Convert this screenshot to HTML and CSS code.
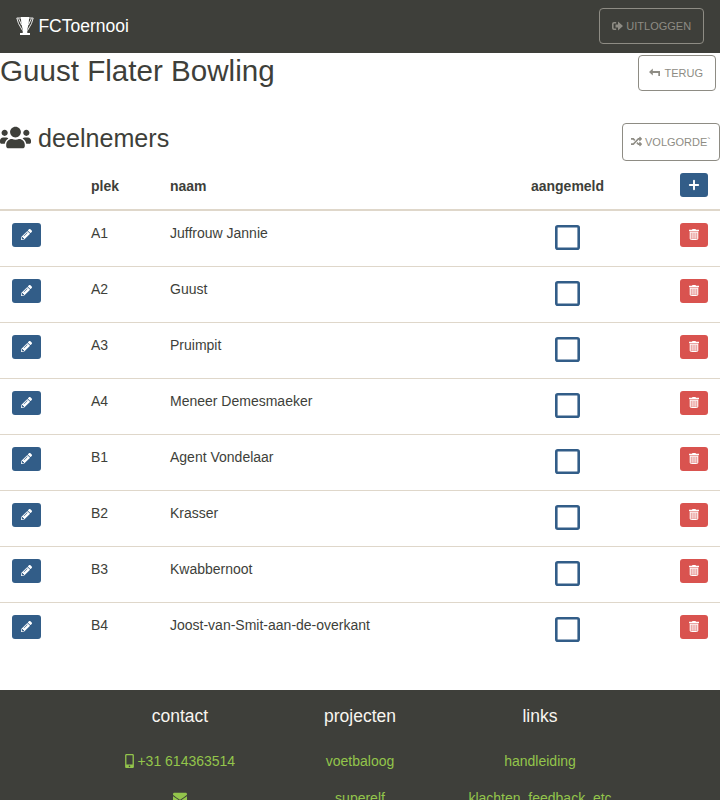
FILE: index.html
```html
<!DOCTYPE html>
<html lang="nl">
<head>
<meta charset="utf-8">
<title>FCToernooi</title>
<link rel="stylesheet" href="styles.css">
</head>
<body>
<svg class="defs" aria-hidden="true">
<symbol id="trophy" viewBox="0 0 18 18"><path fill="currentColor" d="M4.800 0h8.400l-.6 7-1.300 5.500v3.500H14v2H4v-2h2.700v-3.500L5.400 7z"/><path fill="none" stroke="currentColor" stroke-width=".9" d="M5 1H.8L2.500 6.500 6.500 13.500M13 1h4.200L15.500 6.500 11.500 13.500M2.600 1.500l3 6.500M15.400 1.500l-3 6.500"/></symbol>
<symbol id="out" viewBox="0 0 11 10"><path fill="none" stroke="currentColor" stroke-width="1.600" d="M4.200 1.800H2Q.8 1.800.8 3v4Q.8 8.200 2 8.200h2.200"/><path fill="currentColor" d="M3.500 3.400H6V.5L11 5 6 9.500V6.600H3.500z"/></symbol>
<symbol id="back" viewBox="0 0 11 10"><path fill="currentColor" d="M0 4L3.800.5V3H11v5H9.300V5H3.800v2.500z"/></symbol>
<symbol id="random" viewBox="0 0 512 512"><path fill="currentColor" d="M505 359c9 9 9 25 0 34l-80 80c-15 15-41 4-41-17v-40h-58c-3 0-7-2-9-4l-70-75 53-57 53 56h31v-40c0-21 26-32 41-17zM12 176h84l53 56 53-57-70-75c-2-3-5-4-9-4H12c-7 0-12 5-12 12v56c0 7 5 12 12 12zm372 0v40c0 21 26 32 41 17l80-80c9-9 9-25 0-34l-80-80c-15-15-41-4-41 17v40h-58c-3 0-7 2-9 4L96 336H12c-7 0-12 5-12 12v56c0 7 5 12 12 12h111c3 0 6-1 9-4l221-236z"/></symbol>
<symbol id="users" viewBox="0 0 640 512"><path fill="currentColor" d="M96 224c35.300 0 64-28.700 64-64s-28.700-64-64-64-64 28.700-64 64 28.700 64 64 64zm448 0c35.300 0 64-28.700 64-64s-28.700-64-64-64-64 28.700-64 64 28.700 64 64 64zm32 32h-64c-17.600 0-33.500 7.100-45.100 18.600 40.300 22.100 68.900 62 75.100 109.400h66c17.700 0 32-14.300 32-32v-32c0-35.300-28.700-64-64-64zm-256 0c61.900 0 112-50.100 112-112S381.900 32 320 32 208 82.100 208 144s50.100 112 112 112zm76.800 32h-8.300c-20.800 10-43.900 16-68.500 16s-47.600-6-68.500-16h-8.300C179.600 288 128 339.600 128 403.200V432c0 26.500 21.500 48 48 48h288c26.500 0 48-21.500 48-48v-28.800c0-63.600-51.600-115.200-115.200-115.200zm-223.700-13.400C161.500 263.100 145.600 256 128 256H64c-35.300 0-64 28.700-64 64v32c0 17.700 14.300 32 32 32h65.900c6.300-47.400 34.900-87.300 75.200-109.400z"/></symbol>
<symbol id="plus" viewBox="0 0 12 12"><path fill="none" stroke="currentColor" stroke-width="1.900" stroke-linecap="round" d="M6 1.800v8.400M1.800 6h8.400"/></symbol>
<symbol id="pencil" viewBox="0 0 512 512"><path fill="currentColor" d="M498 142l-46 46c-5 5-13 5-17 0L324 77c-5-5-5-12 0-17l46-46c19-19 49-19 68 0l60 60c19 19 19 49 0 68zm-214-42L22 362 0 484c-3 16 12 30 28 28l122-22 262-262c5-5 5-13 0-17L301 100c-4-5-12-5-17 0zM124 340c-5-6-5-14 0-20l154-154c6-5 14-5 20 0s5 14 0 20L144 340c-6 5-14 5-20 0zm-36 84h48v36l-64 12-32-31 12-65h36v48z"/></symbol>
<symbol id="trash" viewBox="0 0 10 11"><path fill="currentColor" d="M0 .8h3L3.500 0h3L7 .8h3v1.400H0z"/><path fill="currentColor" fill-opacity=".45" d="M1 3h8v7H1z"/><path fill="none" stroke="currentColor" d="M1.200 2.800v6.700q0 1 1 1h5.600q1 0 1-1V2.800M1.200 3.200h7.600"/><path stroke="currentColor" stroke-width=".6" d="M3.300 4v5.500M5 4v5.500M6.700 4v5.500"/></symbol>
<symbol id="box" viewBox="0 0 25 25"><rect x="1.300" y="1.300" width="22.400" height="22.400" rx="1.500" fill="none" stroke="currentColor" stroke-width="2.600"/></symbol>
<symbol id="mobile" viewBox="0 0 320 512"><path fill="currentColor" fill-rule="evenodd" d="M272 0H48C21.500 0 0 21.500 0 48v416c0 26.500 21.500 48 48 48h224c26.500 0 48-21.500 48-48V48c0-26.500-21.500-48-48-48zM160 480c-17.700 0-32-14.300-32-32s14.300-32 32-32 32 14.300 32 32-14.300 32-32 32zm112-108c0 6.600-5.400 12-12 12H60c-6.600 0-12-5.400-12-12V60c0-6.600 5.400-12 12-12h200c6.600 0 12 5.400 12 12v312z"/></symbol>
<symbol id="mail" viewBox="0 0 512 512"><path fill="currentColor" d="M502.300 190.800c3.900-3.100 9.700-.2 9.700 4.700V400c0 26.500-21.500 48-48 48H48c-26.500 0-48-21.500-48-48V195.600c0-5 5.700-7.800 9.700-4.700 22.400 17.400 52.100 39.500 154.100 113.600 21.100 15.400 56.700 47.800 92.200 47.600 35.700.3 72-32.800 92.300-47.600 102-74.100 131.600-96.300 154-113.700zM256 320c23.200.4 56.600-29.200 73.400-41.400 132.700-96.300 142.800-104.700 173.400-128.700 5.800-4.500 9.200-11.500 9.200-18.900v-19c0-26.500-21.500-48-48-48H48c-26.500 0-48 21.500-48 48v19c0 7.400 3.400 14.300 9.200 18.900 30.600 23.900 40.700 32.400 173.400 128.700 16.800 12.200 50.200 41.800 73.400 41.400z"/></symbol>
</svg>
<nav class="navbar">
<a class="brand"><svg class="i-trophy"><use href="#trophy"/></svg>FCToernooi</a>
<button class="btn-outline logout"><svg class="i-out"><use href="#out"/></svg>UITLOGGEN</button>
</nav>
<main>
<header class="title"><h1>Guust Flater Bowling</h1><button class="btn-outline back"><svg class="i-back"><use href="#back"/></svg>TERUG</button></header>
<div class="section"><h2><svg class="i-users"><use href="#users"/></svg>deelnemers</h2><button class="btn-outline order"><svg class="i-random"><use href="#random"/></svg>VOLGORDE`</button></div>
<div class="table">
<div class="row head"><span></span><span>plek</span><span>naam</span><span class="center">aangemeld</span><button class="btn add"><svg class="i-plus"><use href="#plus"/></svg></button></div>
<div class="row"><button class="btn edit"><svg class="i-pencil"><use href="#pencil"/></svg></button><span>A1</span><span>Juffrouw Jannie</span><svg class="check"><use href="#box"/></svg><button class="btn delete"><svg class="i-trash"><use href="#trash"/></svg></button></div>
<div class="row"><button class="btn edit"><svg class="i-pencil"><use href="#pencil"/></svg></button><span>A2</span><span>Guust</span><svg class="check"><use href="#box"/></svg><button class="btn delete"><svg class="i-trash"><use href="#trash"/></svg></button></div>
<div class="row"><button class="btn edit"><svg class="i-pencil"><use href="#pencil"/></svg></button><span>A3</span><span>Pruimpit</span><svg class="check"><use href="#box"/></svg><button class="btn delete"><svg class="i-trash"><use href="#trash"/></svg></button></div>
<div class="row"><button class="btn edit"><svg class="i-pencil"><use href="#pencil"/></svg></button><span>A4</span><span>Meneer Demesmaeker</span><svg class="check"><use href="#box"/></svg><button class="btn delete"><svg class="i-trash"><use href="#trash"/></svg></button></div>
<div class="row"><button class="btn edit"><svg class="i-pencil"><use href="#pencil"/></svg></button><span>B1</span><span>Agent Vondelaar</span><svg class="check"><use href="#box"/></svg><button class="btn delete"><svg class="i-trash"><use href="#trash"/></svg></button></div>
<div class="row"><button class="btn edit"><svg class="i-pencil"><use href="#pencil"/></svg></button><span>B2</span><span>Krasser</span><svg class="check"><use href="#box"/></svg><button class="btn delete"><svg class="i-trash"><use href="#trash"/></svg></button></div>
<div class="row"><button class="btn edit"><svg class="i-pencil"><use href="#pencil"/></svg></button><span>B3</span><span>Kwabbernoot</span><svg class="check"><use href="#box"/></svg><button class="btn delete"><svg class="i-trash"><use href="#trash"/></svg></button></div>
<div class="row"><button class="btn edit"><svg class="i-pencil"><use href="#pencil"/></svg></button><span>B4</span><span>Joost-van-Smit-aan-de-overkant</span><svg class="check"><use href="#box"/></svg><button class="btn delete"><svg class="i-trash"><use href="#trash"/></svg></button></div>
</div>
</main>
<footer>
<div class="col"><h5>contact</h5><a><svg class="i-mobile"><use href="#mobile"/></svg>+31 614363514</a><a><svg class="i-mail"><use href="#mail"/></svg></a></div>
<div class="col"><h5>projecten</h5><a>voetbaloog</a><a>superelf</a></div>
<div class="col"><h5>links</h5><a>handleiding</a><a>klachten, feedback, etc</a></div>
</footer>
</body>
</html>
```
FILE: styles.css
```css
* { box-sizing: border-box; }
html, body { margin: 0; height: 800px; overflow: hidden; }
body { font: 14px/21px "Liberation Sans", Arial, sans-serif; color: #3e3f3a; background: #fff; display: flex; flex-direction: column; }
.defs { display: none; }
svg { flex: none; }
h1, h2, h5 { margin: 0; font-weight: 400; }
button { font-family: inherit; margin: 0; padding: 0; }
.navbar { height: 53px; flex: none; background: #3e3f3a; padding: 8px 16px; display: flex; justify-content: space-between; align-items: flex-start; }
.brand { color: #fff; font-size: 17.5px; line-height: 26px; display: flex; align-items: center; gap: 4.4px; padding-top: 5px; }
.i-trophy { width: 18px; height: 18px; }
.btn-outline { display: flex; align-items: center; border: 1px solid #8e8c84; border-radius: 4px; background: transparent; color: #8e8c84; font-size: 11px; line-height: 16px; height: 36px; white-space: nowrap; }
.logout { width: 105px; padding-left: 12px; gap: 3.3px; }
.i-out { width: 11px; height: 10px; }
.title { display: flex; justify-content: space-between; height: 70px; padding: 2px 4px 0 0; }
h1 { font-size: 29.6px; line-height: 32px; }
.back { width: 78px; padding-left: 10px; gap: 4.5px; }
.i-back { width: 11px; height: 10px; margin-bottom: 1px; }
.section { display: flex; justify-content: space-between; height: 38px; }
h2 { font-size: 25.12px; line-height: 30px; height: 30px; display: flex; align-items: center; gap: 7px; }
.i-users { width: 31px; height: 25px; margin-bottom: 2px; }
.order { height: 38px; width: 98px; padding-left: 8px; gap: 3px; }
.i-random { width: 11px; height: 11px; margin-bottom: 2px; }
.row { display: grid; grid-template-columns: 79px 79px 349px 97px 1fr; align-items: start; height: 56px; padding: 12px 12px 0; border-top: 1px solid #dfd7ca; }
.head { height: 50px; border-top: 0; border-bottom: 2px solid #dfd7ca; font-weight: 700; }
.head > span { padding-top: 3px; }
.head + .row { border-top: 0; height: 55px; }
.center { text-align: center; }
.btn { height: 24px; border: 0; border-radius: 3px; color: #fff; display: flex; align-items: center; justify-content: center; }
.edit { width: 29px; background: #325d88; }
.add, .delete { width: 28px; justify-self: end; }
.add { background: #325d88; }
.delete { background: #d9534f; }
.i-pencil { width: 11px; height: 11px; margin-bottom: 1px; }
.i-trash { width: 10px; height: 11px; margin-bottom: 1px; }
.i-plus { width: 12px; height: 12px; margin-bottom: 1px; }
.check { justify-self: center; width: 25px; height: 25px; margin-top: 1.5px; color: #325d88; }
footer { margin-top: auto; flex: none; height: 110px; overflow: hidden; background: #3e3f3a; display: grid; grid-template-columns: repeat(3, 180px); justify-content: center; }
.col { display: flex; flex-direction: column; align-items: center; padding-top: 15px; }
h5 { font-size: 17.5px; line-height: 22px; margin-bottom: 24px; color: #f8f5f0; }
.col a { color: #93c54b; line-height: 21px; height: 21px; margin-bottom: 16px; display: flex; align-items: center; gap: 3.6px; white-space: nowrap; }
.i-mobile { width: 9px; height: 14px; margin-bottom: 1px; }
.i-mail { width: 14px; height: 14px; margin-bottom: 1px; }
```
